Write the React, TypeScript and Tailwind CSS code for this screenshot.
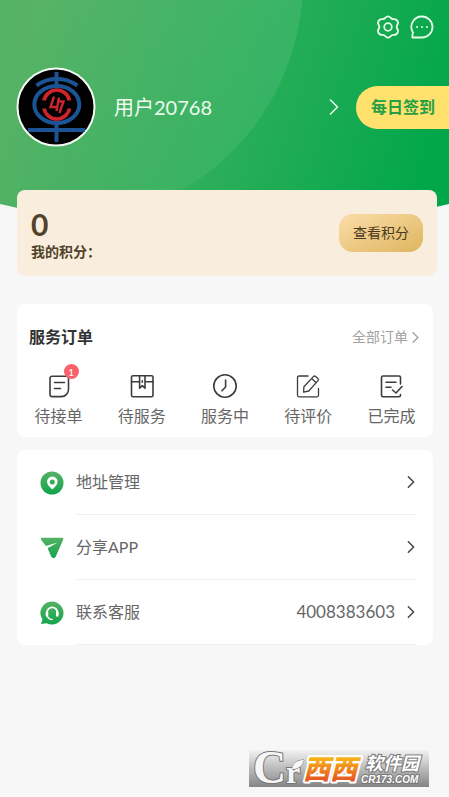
import React from 'react';

const orders = [
  { name: '待接单', icon: <ReceiveIcon />, badge: 1 },
  { name: '待服务', icon: <BoxIcon /> },
  { name: '服务中', icon: <ClockIcon /> },
  { name: '待评价', icon: <EditIcon /> },
  { name: '已完成', icon: <DoneIcon /> },
];

const menu = [
  { name: '地址管理', icon: <PinIcon /> },
  { name: '分享APP', icon: <ShareIcon /> },
  { name: '联系客服', icon: <ServiceIcon />, value: '4008383603' },
];

function OrderSvg({ children }: { children: React.ReactNode }) {
  return (
    <svg viewBox="0 0 24 24" className="size-6" fill="none" stroke="#3c3c3c" strokeWidth="1.6" strokeLinecap="round" strokeLinejoin="round" aria-hidden="true">
      {children}
    </svg>
  );
}

function ReceiveIcon() {
  return (
    <OrderSvg>
      <path d="M5 2.2h14.500a2 2 0 0 1 2 2V15a7.200 7.200 0 0 1-7.200 7.600H5a2 2 0 0 1-2-2V4.200a2 2 0 0 1 2-2Z" />
      <path d="M7.500 8.500h10M7.500 14.500h6" />
    </OrderSvg>
  );
}

function BoxIcon() {
  return (
    <OrderSvg>
      <rect x="1.500" y="1.800" width="21.500" height="21" rx="1.500" />
      <path d="M1.500 7.700h8M15 7.700h8M9.600 2v12.300l2.700-2.700 2.700 2.700V2M12.300 6.800v1.500" />
    </OrderSvg>
  );
}

function ClockIcon() {
  return (
    <OrderSvg>
      <circle cx="12" cy="12" r="11.200" />
      <path d="M12.600 6v7l-3.600 3.800" />
    </OrderSvg>
  );
}

function EditIcon() {
  return (
    <OrderSvg>
      <path d="M12 2H3a1.500 1.500 0 0 0-1.500 1.500v17.800a1.500 1.500 0 0 0 1.500 1.500h18a1.500 1.500 0 0 0 1.500-1.500v-7" strokeWidth="1.300" />
      <path d="m7.600 18.200.3-5.400L17.600 2.400q1-.9 2 0l2.400 2.200q.9 1 0 2L12.800 17ZM15.600 4.600l4.300 4" strokeWidth="1.300" />
    </OrderSvg>
  );
}

function DoneIcon() {
  return (
    <OrderSvg>
      <path d="M21.500 10V3.500A1.500 1.500 0 0 0 20 2H4a1.500 1.500 0 0 0-1.500 1.500v17.800a1.500 1.500 0 0 0 1.500 1.500h16a1.500 1.500 0 0 0 1.500-1.500v-.8" />
      <path d="M7 8.300h10M7 13.300h5M13.500 16l3.500 3 6-6.500" />
    </OrderSvg>
  );
}

function PinIcon() {
  return (
    <svg viewBox="0 0 24 24" className="size-6" aria-hidden="true">
      <circle cx="12" cy="12" r="11.500" fill="url(#leaf)" />
      <path fillRule="evenodd" fill="#fff" d="M12.300 18.500c-2.800-2.600-5.300-4.900-5.300-7.700a5.300 5.300 0 0 1 10.600 0c0 2.800-2.500 5.100-5.300 7.700ZM12.300 8.500a2.500 2.500 0 1 0 0 5 2.500 2.500 0 0 0 0-5Z" />
    </svg>
  );
}

function ShareIcon() {
  return (
    <svg viewBox="0 0 24 24" className="size-6" aria-hidden="true">
      <path fill="url(#leaf)" d="M1.800 1.800h20.400q1.700 0 1 1.600l-7.500 17.400q-2.200 2.800-4.400 0L7.600 12.200 17.500 6.500 6 9.900 1 3.800Q.2 2 1.800 1.800Z" />
    </svg>
  );
}

function ServiceIcon() {
  return (
    <svg viewBox="0 0 24 24" className="size-6" aria-hidden="true">
      <path fill="url(#leaf)" d="M12 .500a11.500 11.500 0 1 1-5.300 21.700L1 23l1.500-4.500A11.500 11.500 0 0 1 12 .500Z" />
      <path d="M7 13v-1.500a5.200 5.200 0 0 1 10.400 0V13" fill="none" stroke="#fff" strokeWidth="1.800" />
      <path d="M7 11.500v3M17.300 11.500v3" stroke="#fff" strokeWidth="2.600" strokeLinecap="round" />
      <path d="M7.500 15.500q1.500 3 4.500 3" fill="none" stroke="#fff" strokeWidth="1.500" strokeLinecap="round" />
    </svg>
  );
}

function Chevron({ className }: { className: string }) {
  return (
    <svg viewBox="0 0 10 16" className={className} fill="none" stroke="currentColor" strokeLinecap="round" strokeLinejoin="round" aria-hidden="true">
      <path d="m1.500 1 7 7-7 7" />
    </svg>
  );
}

function Avatar() {
  return (
    <svg viewBox="0 0 80 80" className="size-20 shrink-0" fill="none" stroke="#1b5494" strokeWidth="4" aria-label="头像">
      <circle cx="40" cy="40" r="38.500" fill="#000" stroke="#f4fbf4" strokeWidth="2" />
      <path d="M40.500 5v14M20.500 18.500q20-13.500 41 0M40.500 56v19" />
      <path d="M12 63h57" />
      <ellipse cx="40.800" cy="37.500" rx="22.500" ry="18.500" />
      <g stroke="#d0242c">
        <path d="M28 33.500a13 13 0 0 1 25.500 0M28 41.500a13 13 0 0 0 25.500 0" strokeWidth="3.600" />
        <path d="M38 29.500 34.500 40H40.500M43 30.500 40.500 44M41 34.500H47.500L43.500 46" strokeWidth="2.400" />
      </g>
    </svg>
  );
}

function Header() {
  return (
    <header className="relative">
      <svg viewBox="0 0 449 231" preserveAspectRatio="none" className="absolute inset-x-0 top-0 h-[231px] w-full" aria-hidden="true">
        <defs>
          <linearGradient id="sky" gradientUnits="userSpaceOnUse" x1="20" y1="60" x2="420" y2="190">
            <stop offset="0" stopColor="#56b266" />
            <stop offset=".5" stopColor="#2dae5a" />
            <stop offset="1" stopColor="#02a74a" />
          </linearGradient>
          <linearGradient id="glow">
            <stop offset=".4" stopColor="#fff" stopOpacity="0" />
            <stop offset="1" stopColor="#fff" stopOpacity=".09" />
          </linearGradient>
          <clipPath id="hill">
            <path d="M0 0H449V204Q224 258 0 204Z" />
          </clipPath>
          <linearGradient id="leaf" x1="0" y1="0" x2="0" y2="1">
            <stop offset="0" stopColor="#55b264" />
            <stop offset="1" stopColor="#12a44c" />
          </linearGradient>
        </defs>
        <g clipPath="url(#hill)">
          <path d="M0 0H449V231H0Z" fill="url(#sky)" />
          <circle cx="60" cy="-20" r="243" fill="url(#glow)" />
        </g>
      </svg>
      <div className="relative flex h-[68px] items-start justify-end gap-[10px] pt-[15px] pr-[15px]">
        <button aria-label="设置">
          <svg viewBox="0 0 24 24" className="size-6" fill="none" stroke="#e9fbe9" strokeWidth="1.800" strokeLinejoin="round">
            <path d="M9.500 2.600Q12 .2 14.500 2.600q1.200 1.600 3.100 1.500 3.600-.2 4.400 3.300.2 1.400-.8 2.700-1 1.900 0 3.800 1.200 1.500.7 3-.9 3.100-4.300 3-1.900-.1-3.100 1.500-2.500 2.400-5 0-1.200-1.600-3.100-1.500-3.400.1-4.300-3-.5-1.500.7-3 1-1.900 0-3.800-1-1.300-.8-2.700.8-3.500 4.400-3.300 1.900.1 3.100-1.500Z" />
            <circle cx="12" cy="12" r="3.800" />
          </svg>
        </button>
        <button aria-label="消息">
          <svg viewBox="0 0 24 24" className="size-6" fill="none" stroke="#e9fbe9" strokeWidth="1.800" strokeLinejoin="round">
            <path d="M12 1.500A10.500 10.500 0 1 1 12 22.500H2.400V20l.6-2.400A10.500 10.500 0 0 1 12 1.500Z" />
            <path d="M7 12h.01M12 12h.01M17 12h.01" strokeLinecap="round" strokeWidth="2" />
          </svg>
        </button>
      </div>
      <div className="relative flex h-[78px] items-center pl-4">
        <Avatar />
        <button className="ml-[18px] flex grow items-center justify-between text-left text-xl text-[#effaf0]">
          用户20768
          <Chevron className="h-4 w-[10px] stroke-[1.500]" />
        </button>
        <button className="ml-[17px] h-[43px] rounded-l-full bg-[#ffe16e] pr-[14px] pl-[15px] text-base font-bold text-[#259f45]">
          每日签到
        </button>
      </div>
    </header>
  );
}

// site mark in the lower right corner
function SiteMark() {
  return (
    <footer className="mt-auto flex justify-end pr-5 pb-[10px]">
      <svg viewBox="0 0 180 37" className="h-[37px] w-[180px] overflow-visible" aria-label="西西软件园">
        <defs>
          <linearGradient id="plate" x1="0" y1="0" x2="0" y2="1">
            <stop offset="0" stopColor="#f2f2f2" />
            <stop offset="1" stopColor="#858585" />
          </linearGradient>
          <linearGradient id="fire" x1="0" y1="0" x2="0" y2="1">
            <stop offset=".2" stopColor="#f8b21c" />
            <stop offset=".9" stopColor="#e4501f" />
          </linearGradient>
        </defs>
        <path d="M0 0H180V37H0Z" fill="url(#plate)" />
        <g fill="#f6f6f6" stroke="#777" strokeWidth="2" paintOrder="stroke" className="font-['Liberation_Serif',serif]">
          <text x="4" y="33" fontSize="46" fontWeight="700">C</text>
          <text x="37" y="33" fontSize="32" fontWeight="700">r</text>
          <path d="M43 19c1-6 5-9 12-9-2 6-5 9-12 9Z" strokeWidth="1" />
        </g>
        <g fontSize="27" fontWeight="900" fontStyle="italic" strokeLinejoin="round">
          <text x="54" y="29" fill="url(#fire)" stroke="#fff" strokeWidth="4" paintOrder="stroke">西西</text>
        </g>
        <g fill="#fff" stroke="#777" strokeWidth="2" paintOrder="stroke" fontWeight="700" fontStyle="italic">
          <text x="116" y="20" fontSize="18">软件园</text>
          <text x="112" y="33" fontSize="10" className="font-['Liberation_Sans',sans-serif]">CR173.COM</text>
        </g>
      </svg>
    </footer>
  );
}

const App: React.FC = () => {
  return (
    <div className="flex min-h-screen flex-col bg-[#f7f7f7] font-[Lato,'Noto_Sans_CJK_SC',sans-serif] text-[#666]">
      <Header />

      <main className="relative pt-11 pr-4 pl-[17px]">
        <section className="-mr-1 flex h-[86px] items-center justify-between rounded-lg bg-[#f9eedd] px-[14px] text-[#51432a]">
          <div className="pt-[2px]">
            <p className="text-3xl leading-9 font-bold">0</p>
            <p className="text-sm leading-5 font-bold">我的积分：</p>
          </div>
          <button className="h-[38px] rounded-[14px] bg-linear-to-br from-[#fbdda9] to-[#dfb55d] px-[14px] text-sm text-[#49391f]">
            查看积分
          </button>
        </section>

        <section className="mt-7 h-[133px] rounded-lg bg-white pt-[21px]">
          <div className="flex h-6 items-center justify-between pr-[14px] pl-3">
            <h2 className="text-base font-bold text-[#333]">服务订单</h2>
            <a href="#orders" className="flex items-center gap-1 text-sm text-[#a2a2a2]">
              全部订单
              <Chevron className="h-[11px] w-[7px] stroke-[2]" />
            </a>
          </div>
          <div className="mt-[25px] grid grid-cols-5">
            {orders.map((order) => (
              <a key={order.name} href="#order" className="flex flex-col items-center gap-[6px] text-base leading-6">
                <span className="relative">
                  {order.icon}
                  {order.badge && (
                    <span className="absolute -top-[10px] -right-2 flex size-[15px] items-center justify-center rounded-full bg-[#f9626a] text-[10px] leading-none text-white">
                      {order.badge}
                    </span>
                  )}
                </span>
                {order.name}
              </a>
            ))}
          </div>
        </section>

        <section className="mt-[13px] rounded-lg bg-white pr-[17px] pl-[23px]">
          {menu.map((item) => (
            <a key={item.name} href="#menu" className="flex items-center gap-3">
              {item.icon}
              <span className="flex h-[65px] grow items-center border-b border-[#f0f0f0]">
                <span className="text-base">{item.name}</span>
                <span className="ml-auto text-[17px]">{item.value}</span>
                <Chevron className="mr-px ml-3 h-3 w-2 stroke-[2] text-[#444]" />
              </span>
            </a>
          ))}
        </section>
      </main>

      <SiteMark />
    </div>
  );
};

export default App;
